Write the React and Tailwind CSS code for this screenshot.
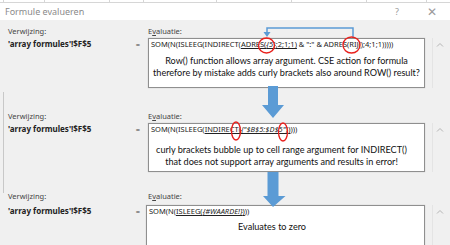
export default function App() {
  return (
    <div className="relative w-[450px] h-[245px] overflow-hidden bg-[#f0f0f0] font-['Lato',sans-serif] text-[#333]">
      <div className="h-[3px] bg-white border-b border-[#d6d6d6] flex">
        {[4, 41, 65, 34, 73, 75, 75, 60].map((w, i) => (
          <div key={i} className="h-full border-r border-[#d6d6d6]" style={{ width: w }} />
        ))}
      </div>
      <div className="h-[17px] bg-white flex items-center justify-between pl-[5px] pr-[13px] text-[9px] text-[#8a8a8a] font-['Noto_Sans',sans-serif]">
        <span>Formule evalueren</span>
        <div className="flex items-center gap-[28px] text-[#9a9a9a]">
          <span className="text-[9px]">?</span>
          <span className="text-[12px] leading-none">✕</span>
        </div>
      </div>

      <Panel
        className="mt-[5px]"
        gapClass="mt-[1px]"
        boxClass="ml-0 h-[50px]"
        formula={
          <>
            SOM(N(ISLEEG(INDIRECT(<span className="underline">ADRES(<i>{'{5}'}</i>;2;1;1)</span> &amp; ":" &amp; ADRES(RIJ();4;1;1)))))
          </>
        }
      >
        <div className="mt-[6px] text-center text-[9.1px] leading-[12px] text-[#111] whitespace-nowrap">
          Row() function allows array argument. CSE action for formula
          <br />
          therefore by mistake adds curly brackets also around ROW() result?
        </div>
      </Panel>

      <Panel
        className="mt-[22px]"
        gapClass="mt-[1px]"
        boxClass="ml-0 h-[49px]"
        formula={
          <>
            SOM(N(ISLEEG(<span className="underline">INDIRECT(<i>{'{"$B$5:$D$5"}'}</i>)</span>)))
          </>
        }
      >
        <div className="mt-[10px] pr-[10px] text-center text-[9.1px] leading-[12px] text-[#111] whitespace-nowrap">
          curly brackets bubble up to cell range argument for INDIRECT()
          <br />
          that does not support array arguments and results in error!
        </div>
      </Panel>

      <Panel
        className="mt-[18px]"
        gapClass="mt-[3px]"
        boxClass="-ml-[2px] h-[50px]"
        formula={
          <>
            SOM(N(<span className="underline">ISLEEG(<i>{'{#WAARDE!}'}</i>)</span>))
          </>
        }
      >
        <div className="mt-[5px] pl-[91px] text-[9.1px] leading-[12px] text-[#111]">Evaluates to zero</div>
      </Panel>

      <div className="absolute left-[3px] top-[92px] h-[101px] w-px bg-[#c8c8c8]" />

      <svg className="absolute inset-0 pointer-events-none" width="450" height="245" viewBox="0 0 450 245">
        <path d="M267 33 V28 H353 V38" fill="none" stroke="#5b9bd5" strokeWidth="1.5" />
        <path d="M263.5 32 H270.5 L267 37 Z" fill="#5b9bd5" />
        <ellipse cx="266.5" cy="45.5" rx="8" ry="7.5" fill="none" stroke="#e8201c" strokeWidth="1.4" />
        <ellipse cx="351.5" cy="45" rx="8.5" ry="8" fill="none" stroke="#e8201c" strokeWidth="1.4" />
        <ellipse cx="236" cy="131" rx="4.5" ry="9" fill="none" stroke="#e8201c" strokeWidth="1.3" />
        <ellipse cx="283" cy="132" rx="4.5" ry="9" fill="none" stroke="#e8201c" strokeWidth="1.3" />
        <path d="M268 86 H278 V105 H284 L273 118 L262 105 H268 Z" fill="#5b9bd5" />
        <path d="M267.5 172 H278.5 V196 H285.5 L273 207 L263 196 H267.5 Z" fill="#5b9bd5" />
      </svg>
    </div>
  );
}

function Panel({ className, gapClass, boxClass, formula, children }) {
  return (
    <div className={`grid grid-cols-[148px_277px_25px] font-['Noto_Sans',sans-serif] ${className}`}>
      <div className="pl-[8px] h-[12px] leading-[12px] text-[7.5px] text-[#444]">
        Verwi<span className="underline">j</span>zing:
      </div>
      <div className="h-[12px] leading-[12px] text-[7.5px] text-[#444]">
        E<span className="underline">v</span>aluatie:
      </div>
      <div />
      <div className={`flex justify-between pl-[8px] pr-[8px] ${gapClass}`}>
        <span className="font-bold text-[8px] leading-[11px] text-[#222]">'array formules'!$F$5</span>
        <span className="text-[7.5px] leading-[12px] text-[#444]">=</span>
      </div>
      <div className={`${gapClass} ${boxClass} bg-white border border-[#8f8f8f] shadow-[0_0_1px_#bbb] overflow-hidden`}>
        <div className="pl-[2px] text-[7.5px] leading-[10px] text-[#222] whitespace-nowrap">{formula}</div>
        <div className="font-['Lato',sans-serif]">{children}</div>
      </div>
      <div className={`${gapClass} ml-[7px] border-l border-[#e4e4e4] pl-[3px] pt-[4px]`}>
        <svg width="8" height="6" viewBox="0 0 8 6">
          <path d="M1 4.5 L4 1.5 L7 4.5" fill="none" stroke="#b5b5b5" strokeWidth="1" />
        </svg>
      </div>
    </div>
  );
}
